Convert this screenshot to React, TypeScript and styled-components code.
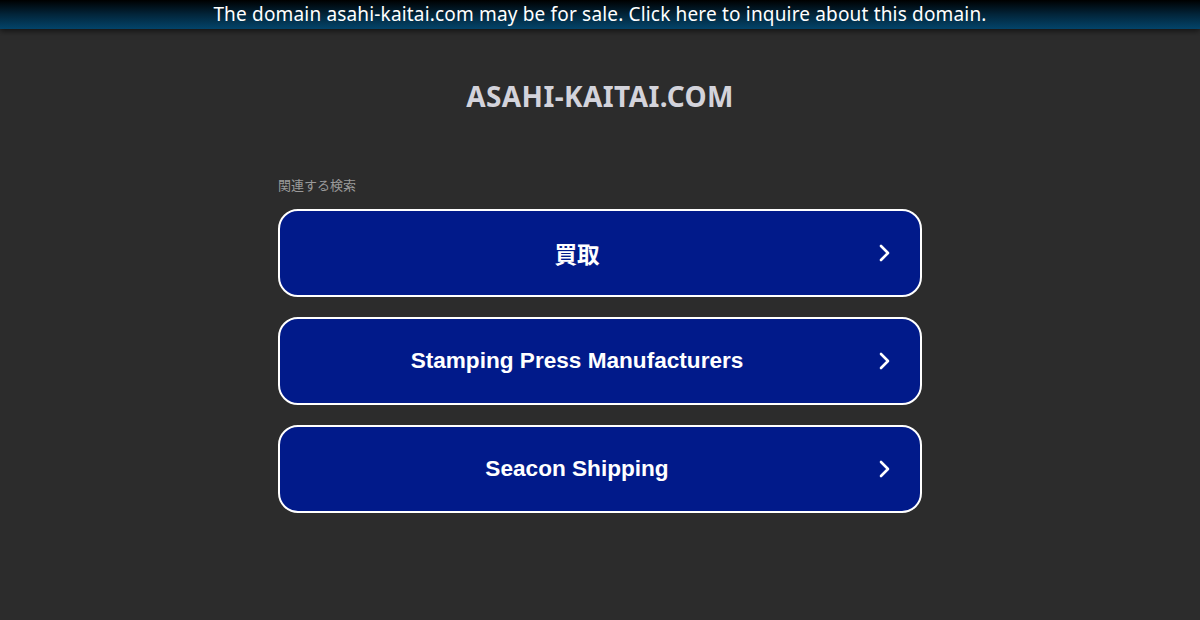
import styled, { createGlobalStyle } from "styled-components";

const GlobalStyle = createGlobalStyle`
  html, body {
    margin: 0;
    padding: 0;
    background: #2c2c2c;
  }
`;

const Page = styled.div`
  min-height: 620px;
  background: #2c2c2c;
  display: flex;
  flex-direction: column;
  align-items: center;
`;

const Banner = styled.a`
  display: block;
  width: 100%;
  height: 29px;
  line-height: 29px;
  text-align: center;
  color: #fff;
  font-family: "Noto Sans", "Open Sans", sans-serif;
  font-size: 19px;
  letter-spacing: 0.17px;
  text-decoration: none;
  background: linear-gradient(to bottom, #000 0%, #02253a 50%, #03446a 100%);
  box-shadow: 0 2px 6px rgba(0, 0, 0, 0.6);
`;

const Title = styled.h1`
  margin: 47px 0 0;
  font-family: "Noto Sans", "Open Sans", sans-serif;
  font-weight: 700;
  font-size: 28px;
  letter-spacing: 0.4px;
  color: #d3d3db;
  height: 40px;
  line-height: 40px;
`;

const Related = styled.div`
  width: 644px;
  margin-top: 61px;
  display: flex;
  flex-direction: column;
`;

const Label = styled.div`
  font-family: "Noto Sans CJK JP", "Noto Sans", sans-serif;
  font-size: 13px;
  color: #9a9a9a;
  height: 16px;
  line-height: 16px;
  margin-bottom: 16px;
`;

const List = styled.div`
  display: flex;
  flex-direction: column;
  gap: 20px;
`;

const Item = styled.a`
  position: relative;
  display: flex;
  align-items: center;
  justify-content: center;
  height: 84px;
  padding-right: 46px;
  box-sizing: content-box;
  border: 2px solid #fff;
  border-radius: 20px;
  background: #011a8a;
  color: #fff;
  font-family: "Liberation Sans", Arial, "Noto Sans CJK JP", sans-serif;
  font-weight: 700;
  font-size: 22.6px;
  text-decoration: none;
`;

const Chevron = styled.svg`
  position: absolute;
  right: 28px;
  top: 50%;
  transform: translateY(-50%);
`;

const items = ["買取", "Stamping Press Manufacturers", "Seacon Shipping"];

export default function App() {
  return (
    <Page>
      <GlobalStyle />
      <Banner href="#">The domain asahi-kaitai.com may be for sale. Click here to inquire about this domain.</Banner>
      <Title>ASAHI-KAITAI.COM</Title>
      <Related>
        <Label>関連する検索</Label>
        <List>
          {items.map((t) => (
            <Item key={t} href="#">
              {t}
              <Chevron width="14" height="20" viewBox="0 0 14 20">
                <path d="M3 3 L10 10 L3 17" fill="none" stroke="#fff" strokeWidth="2.6" strokeLinecap="round" strokeLinejoin="round" />
              </Chevron>
            </Item>
          ))}
        </List>
      </Related>
    </Page>
  );
}
